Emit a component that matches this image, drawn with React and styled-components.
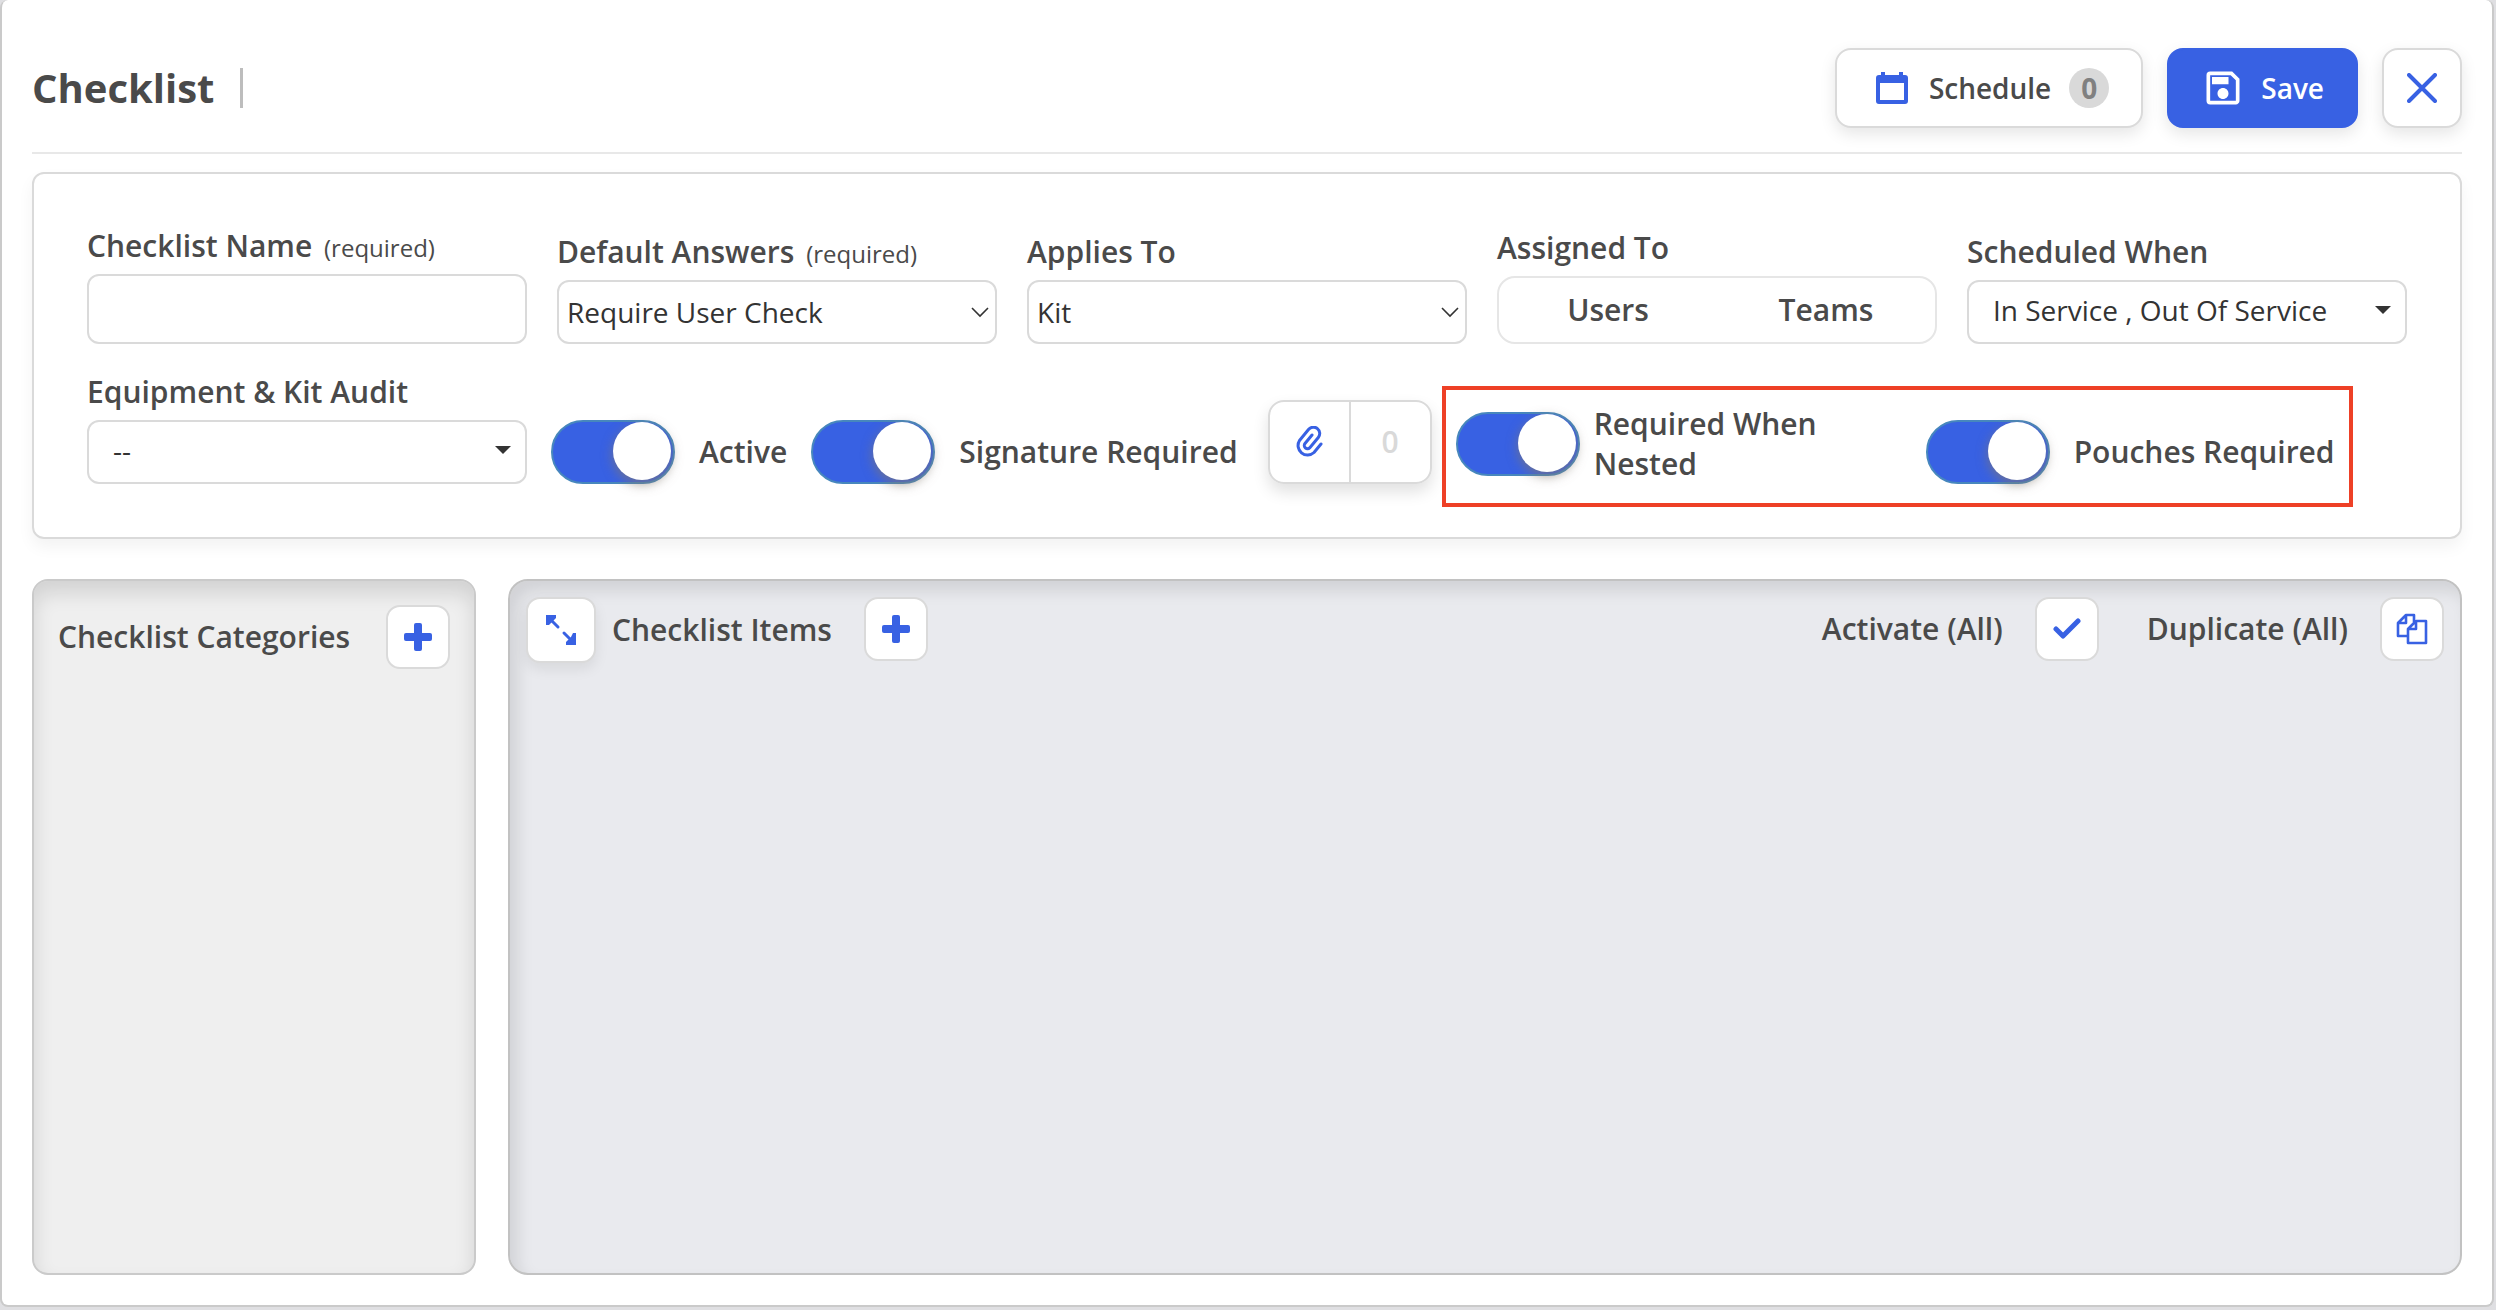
import React, { useState } from 'react';
import styled, { createGlobalStyle } from 'styled-components';
import { MdOutlineSave } from 'react-icons/md';

const CalendarIcon = () => (
  <svg width="36" height="32" viewBox="0 0 36 32" fill="none" aria-hidden="true">
    <path d="M4 3h2V0h4v3h14V0h4v3h2q3 0 3 3v23q0 3-3 3H4q-3 0-3-3V6q0-3 3-3z" fill="#3861e3" />
    <rect x="5" y="11" width="24" height="17" fill="#fff" />
  </svg>
);

const CloseIcon = () => (
  <svg width="30" height="30" viewBox="0 0 30 30" aria-hidden="true">
    <path d="M2 2l26 26M28 2L2 28" stroke="#3861e3" strokeWidth="4" strokeLinecap="round" />
  </svg>
);

const PlusIcon = () => (
  <svg width="28" height="28" viewBox="0 0 28 28" fill="#3861e3" aria-hidden="true">
    <rect x="10" y="0" width="8" height="28" rx="2" />
    <rect x="0" y="10" width="28" height="8" rx="2" />
  </svg>
);

const CheckIcon = () => (
  <svg width="30" height="22" viewBox="0 0 30 22" fill="none" aria-hidden="true">
    <path d="M4 11l7 7L26 3" stroke="#3861e3" strokeWidth="5" strokeLinecap="round" strokeLinejoin="round" />
  </svg>
);

const ExpandIcon = () => (
  <svg width="30" height="30" viewBox="0 0 30 30" fill="none" aria-hidden="true">
    <path d="M4 4l8 8M18 18l8 8" stroke="#3861e3" strokeWidth="3" strokeLinecap="round" />
    <path d="M0 0h10v3L8 5 5 8 3 10H0zM30 30H20v-3l2-2 3-3 2-4h3z" fill="#3861e3" />
  </svg>
);

const CopyIcon = () => (
  <svg width="32" height="32" viewBox="0 0 32 32" fill="none" aria-hidden="true">
    <g stroke="#3861e3" strokeWidth="2.6" strokeLinejoin="round">
      <path d="M12 23H2V10l8-8h8v7M10 2v8H2" />
      <path d="M20 8h10v22H12V16zM20 8v8h-8" />
    </g>
  </svg>
);

const ClipIcon = () => (
  <svg width="28" height="32" viewBox="0 0 28 32" fill="none" aria-hidden="true">
    <path
      d="M26 18l-7 8.500a9.500 9.500 0 0 1-14.500-12L13.500 3.500a6.300 6.300 0 0 1 9.800 8L15 21.500a3.200 3.200 0 0 1-5-4l7-8.500"
      stroke="#3861e3"
      strokeWidth="3"
      strokeLinecap="round"
      strokeLinejoin="round"
    />
  </svg>
);

const ChevronIcon = () => (
  <svg width="18" height="12" viewBox="0 0 18 12" fill="none" aria-hidden="true">
    <path d="M1 2l8 8 8-8" stroke="#333" strokeWidth="1.6" />
  </svg>
);

const CaretIcon = () => (
  <svg width="16" height="8" viewBox="0 0 16 8" fill="#333" aria-hidden="true">
    <path d="M0 0h16L8 8z" />
  </svg>
);

//One select with its label, the caret version has more space on the left
const SelectField = ({ id, label, required, options, caret }) => (
  <Field>
    <Label htmlFor={id}>
      {label} {required && <small>(required)</small>}
    </Label>
    <SelectWrap $caret={caret}>
      <select id={id}>
        {options.map((option) => (
          <option key={option}>{option}</option>
        ))}
      </select>
      {caret ? <CaretIcon /> : <ChevronIcon />}
    </SelectWrap>
  </Field>
);

const ToggleField = ({ label, compact }) => {
  const [checked, setChecked] = useState(true);
  return (
    <ToggleLabel $compact={compact}>
      <Toggle checked={checked} onChange={() => setChecked(!checked)} />
      <span>{label}</span>
    </ToggleLabel>
  );
};

function App() {
  const [name, setName] = useState('');

  return (
    <>
      <GlobalStyle />
      <Page>
        <Dialog>
          <Header>
            <Title>Checklist</Title>
            <Actions>
              <Button>
                <CalendarIcon />
                Schedule
                <Badge>0</Badge>
              </Button>
              <Button $primary>
                <MdOutlineSave size={44} aria-hidden="true" />
                Save
              </Button>
              <CloseButton aria-label="Close">
                <CloseIcon />
              </CloseButton>
            </Actions>
          </Header>

          <Settings>
            <FieldGrid>
              <Field>
                <Label htmlFor="name">
                  Checklist Name <small>(required)</small>
                </Label>
                <TextInput id="name" type="text" value={name} onChange={(e) => setName(e.target.value)} />
              </Field>
              <SelectField id="answers" label="Default Answers" required options={['Require User Check']} />
              <SelectField id="applies" label="Applies To" options={['Kit']} />
              <Field>
                <Label as="span" id="assigned">Assigned To</Label>
                <Segmented role="group" aria-labelledby="assigned">
                  <button>Users</button>
                  <button>Teams</button>
                </Segmented>
              </Field>
              <SelectField id="when" label="Scheduled When" options={['In Service , Out Of Service']} caret />
            </FieldGrid>

            <OptionRow>
              <SelectField id="audit" label="Equipment & Kit Audit" options={['--']} caret />
              <ToggleField label="Active" />
              <ToggleField label="Signature Required" />
              <Attachments>
                <button aria-label="Attach a file">
                  <ClipIcon />
                </button>
                <span>0</span>
              </Attachments>
              <Highlighted>
                <ToggleField label="Required When Nested" compact />
                <ToggleField label="Pouches Required" />
              </Highlighted>
            </OptionRow>
          </Settings>

          <Panels>
            <CategoryPanel>
              <h2>Checklist Categories</h2>
              <IconButton aria-label="Add category">
                <PlusIcon />
              </IconButton>
            </CategoryPanel>
            <ItemPanel>
              <ItemGroup $gap="16px">
                <ExpandButton aria-label="Expand">
                  <ExpandIcon />
                </ExpandButton>
                <h2>Checklist Items</h2>
              </ItemGroup>
              <IconButton aria-label="Add item">
                <PlusIcon />
              </IconButton>
              <ItemActions>
                <ItemGroup $gap="32px">
                  <h2>Activate (All)</h2>
                  <IconButton aria-label="Activate all">
                    <CheckIcon />
                  </IconButton>
                </ItemGroup>
                <ItemGroup $gap="32px">
                  <h2>Duplicate (All)</h2>
                  <IconButton aria-label="Duplicate all">
                    <CopyIcon />
                  </IconButton>
                </ItemGroup>
              </ItemActions>
            </ItemPanel>
          </Panels>
        </Dialog>
      </Page>
    </>
  );
}

const GlobalStyle = createGlobalStyle`
  *{
    box-sizing: border-box;
  }
  body{
    margin: 0;
    background-color: #dfdfe2;
    color: #4a4a4a;
    font-family: "Open Sans", "Noto Sans", sans-serif;
    font-size: 30px;
    line-height: 40px;
  }
  button, input, select{
    font: inherit;
    color: inherit;
  }
  button{
    padding: 0;
    cursor: pointer;
  }
  h1, h2{
    margin: 0;
  }
  h2{
    font-size: 30px;
    font-weight: 600;
    white-space: nowrap;
  }
  svg{
    flex: none;
  }
`;

const Page = styled.div`
  display: flex;
  min-height: 100vh;
  padding: 0 2px 3px 0;
`;

const Dialog = styled.main`
  flex: 1;
  display: flex;
  flex-direction: column;
  min-width: 0;
  padding: 0 30px 30px;
  background-color: #fff;
  border: 2px solid #cacaca;
  border-top: none;
  border-radius: 8px;
`;

const Header = styled.header`
  display: flex;
  align-items: center;
  justify-content: space-between;
  padding: 48px 0 24px;
  border-bottom: 2px solid #e8e8e8;
`;

const Title = styled.h1`
  display: flex;
  align-items: center;
  gap: 26px;
  font-size: 40px;
  font-weight: 700;
  &::after{
    content: "";
    width: 3px;
    height: 40px;
    background-color: #bdbdbd;
  }
`;

const Actions = styled.div`
  display: flex;
  gap: 24px;
`;

const Button = styled.button`
  display: flex;
  align-items: center;
  gap: ${(props) => (props.$primary ? '16px' : '18px')};
  height: 80px;
  padding: ${(props) => (props.$primary ? '0 32px' : '0 32px 0 38px')};
  border: 2px solid ${(props) => (props.$primary ? '#3861e3' : '#dadada')};
  border-radius: 16px;
  background-color: ${(props) => (props.$primary ? '#3861e3' : '#fff')};
  color: ${(props) => (props.$primary ? '#fff' : '#4a4a4a')};
  font-size: 28px;
  font-weight: 600;
  box-shadow: 0 6px 16px rgba(0, 0, 0, .1);
`;

const CloseButton = styled(Button)`
  justify-content: center;
  width: 80px;
  padding: 0;
`;

const Badge = styled.span`
  width: 40px;
  height: 40px;
  border-radius: 50%;
  background-color: #d9d9d9;
  color: #808080;
  font-weight: 700;
  text-align: center;
`;

const Settings = styled.section`
  display: flex;
  flex-direction: column;
  gap: 28px;
  margin-top: 18px;
  padding: 52px 53px 53px;
  border: 2px solid #dadada;
  border-radius: 12px;
  box-shadow: 0 8px 16px rgba(0, 0, 0, .05);
`;

const FieldGrid = styled.div`
  display: grid;
  grid-template-columns: repeat(5, minmax(0, 1fr));
  align-items: end;
  gap: 30px;
`;

const Field = styled.div`
  display: flex;
  flex-direction: column;
  gap: 8px;
`;

const Label = styled.label`
  font-weight: 600;
  white-space: nowrap;
  small{
    margin-left: 4px;
    font-size: 24px;
    font-weight: 400;
    line-height: 24px;
  }
`;

const TextInput = styled.input`
  width: 100%;
  height: 70px;
  padding: 0 12px;
  border: 2px solid #dadada;
  border-radius: 12px;
`;

const SelectWrap = styled.div`
  position: relative;
  select{
    appearance: none;
    display: block;
    width: 100%;
    height: 64px;
    padding: ${(props) => (props.$caret ? '0 48px 4px 24px' : '0 48px 0 8px')};
    border: 2px solid #dadada;
    border-radius: 12px;
    background-color: #fff;
    color: #333;
    font-size: 28px;
  }
  svg{
    position: absolute;
    top: 26px;
    right: ${(props) => (props.$caret ? '16px' : '8px')};
    pointer-events: none;
  }
`;

const Segmented = styled.div`
  display: flex;
  height: 68px;
  border: 2px solid #e6e6e6;
  border-radius: 18px;
  button{
    flex: 1;
    border: none;
    background: none;
    font-weight: 600;
  }
`;

const OptionRow = styled.div`
  display: flex;
  align-items: flex-end;
  gap: 24px;
  ${Field}{
    flex: none;
    width: calc((100% - 120px) / 5);
  }
`;

const Toggle = styled.input.attrs({ type: 'checkbox' })`
  appearance: none;
  flex: none;
  display: flex;
  justify-content: ${(props) => (props.checked ? 'flex-end' : 'flex-start')};
  width: 124px;
  height: 64px;
  margin: 0;
  padding: 0 2px;
  border: 2px solid ${(props) => (props.checked ? '#4787bd' : '#dadada')};
  border-radius: 32px;
  background-color: ${(props) => (props.checked ? '#3861e3' : '#eee')};
  cursor: pointer;
  &::before{
    content: "";
    width: 58px;
    height: 58px;
    border-radius: 50%;
    background-color: #fff;
    box-shadow: 0 4px 12px rgba(130, 120, 110, .7);
  }
`;

const ToggleLabel = styled.label`
  display: flex;
  align-items: center;
  gap: ${(props) => (props.$compact ? '14px' : '24px')};
  min-height: 64px;
  font-weight: 600;
  span{
    max-width: ${(props) => (props.$compact ? '240px' : 'none')};
  }
`;

const Attachments = styled.div`
  display: flex;
  flex: none;
  width: 164px;
  height: 84px;
  margin-left: 6px;
  border: 2px solid #dadada;
  border-radius: 16px;
  box-shadow: 0 8px 16px rgba(0, 0, 0, .12);
  button, span{
    flex: 1;
    display: flex;
    align-items: center;
    justify-content: center;
  }
  button{
    border: none;
    border-right: 2px solid #dadada;
    background: none;
  }
  span{
    color: #d9d9d9;
    font-weight: 600;
  }
`;

//The red frame hangs over the row, so it takes no room in it
const Highlighted = styled.div`
  position: relative;
  display: flex;
  align-items: flex-end;
  ${ToggleLabel}:first-child{
    width: 470px;
  }
  &::after{
    content: "";
    position: absolute;
    inset: -18px -18px -23px -14px;
    border: 4px solid #ee4026;
    pointer-events: none;
  }
`;

const Panels = styled.div`
  flex: 1;
  display: flex;
  gap: 32px;
  margin-top: 40px;
`;

const Panel = styled.section`
  display: flex;
  align-items: flex-start;
`;

const CategoryPanel = styled(Panel)`
  flex: none;
  justify-content: space-between;
  width: 444px;
  padding: 24px;
  border: 2px solid #cacaca;
  border-radius: 16px;
  background-color: #efefef;
  box-shadow: inset 0 12px 20px rgba(0, 0, 0, .12);
  h2{
    line-height: 64px;
  }
`;

const ItemPanel = styled(Panel)`
  flex: 1;
  gap: 32px;
  padding: 16px;
  border: 2px solid #c2c2c2;
  border-radius: 20px;
  background-color: #e9eaee;
  box-shadow: inset 8px 10px 16px rgba(0, 0, 0, .1);
`;

const ItemGroup = styled.div`
  display: flex;
  align-items: center;
  gap: ${(props) => props.$gap};
`;

const ItemActions = styled.div`
  display: flex;
  gap: 48px;
  margin-left: auto;
`;

const IconButton = styled.button`
  display: flex;
  align-items: center;
  justify-content: center;
  width: 64px;
  height: 64px;
  border: 2px solid #dadada;
  border-radius: 14px;
  background-color: #fff;
`;

const ExpandButton = styled(IconButton)`
  width: 70px;
  height: 66px;
  box-shadow: 0 6px 14px rgba(0, 0, 0, .08);
`;

export default App;
